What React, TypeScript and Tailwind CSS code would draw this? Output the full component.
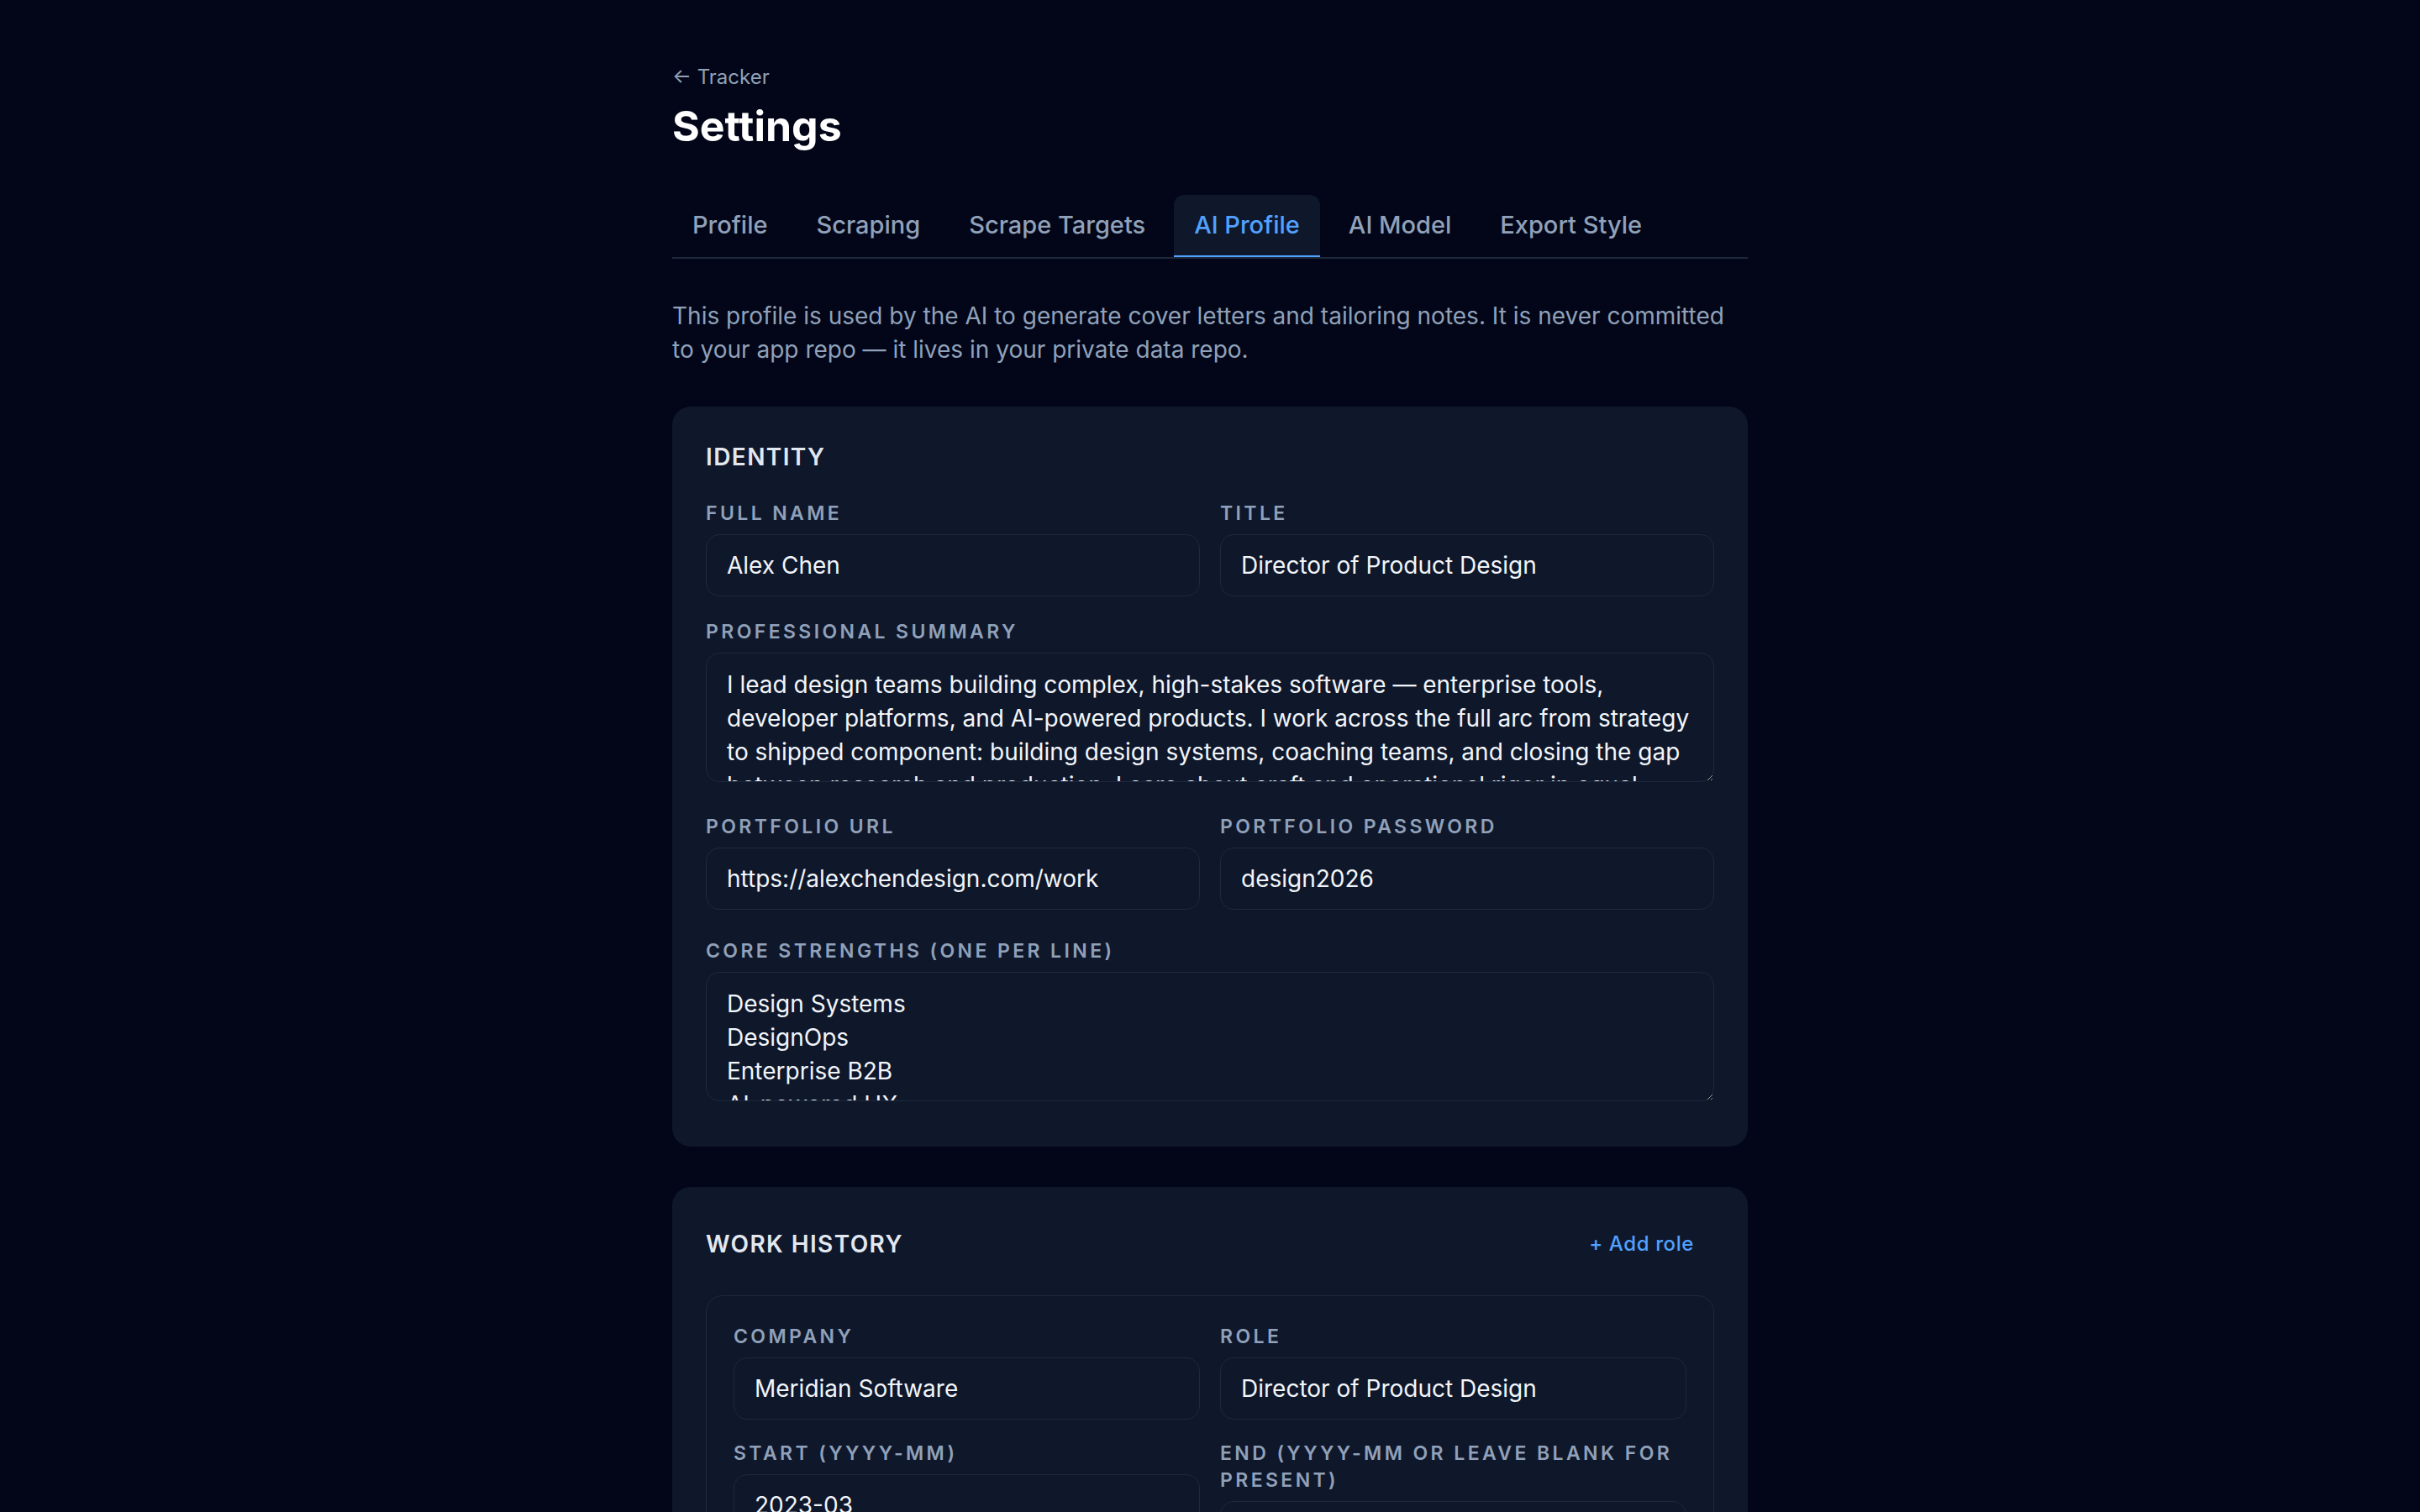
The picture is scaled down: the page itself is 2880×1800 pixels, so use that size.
import { useState } from "react";

const labelCls =
  "block text-[23px] leading-[32px] font-semibold uppercase tracking-[3.4px] text-slate-400 mb-[9px]";
const inputCls =
  "block w-full h-[74px] rounded-[16px] border border-slate-800 bg-slate-900 px-[24px] py-[16px] text-[28px] leading-[40px] text-slate-100 outline-none";
const areaCls =
  "block w-full h-[154px] rounded-[16px] border border-slate-800 bg-slate-900 px-[24px] pt-[17px] pb-[15px] text-[28px] leading-[40px] text-slate-100 outline-none overflow-hidden";

const tabs = ["Profile", "Scraping", "Scrape Targets", "AI Profile", "AI Model", "Export Style"];

const summary =
  "I lead design teams building complex, high-stakes software — enterprise tools, developer platforms, and AI-powered products. I work across the full arc from strategy to shipped component: building design systems, coaching teams, and closing the gap between research and production. I care about craft and operational rigor in equal measure.";

const strengths = "Design Systems\nDesignOps\nEnterprise B2B\nAI-powered UX\nDeveloper Tools\nTeam Leadership";

const Field = ({ label, value }: { label: string; value: string }) => (
  <div>
    <label className={labelCls}>{label}</label>
    <input className={inputCls} defaultValue={value} />
  </div>
);

const App = () => {
  const [active, setActive] = useState("AI Profile");

  return (
    <div className="min-h-screen bg-slate-950 font-['Inter',sans-serif] pb-[120px]">
      <div className="max-w-[1280px] mx-auto pt-[76px]">
        <a className="block text-[24px] leading-[32px] text-slate-400 hover:text-slate-200 cursor-pointer">
          ← Tracker
        </a>
        <h1 className="mt-[10px] text-[50px] leading-[64px] font-bold text-white">Settings</h1>

        <div className="mt-[50px] flex gap-[10px] border-b-2 border-slate-800">
          {tabs.map((t) => (
            <button
              key={t}
              onClick={() => setActive(t)}
              className={
                t === active
                  ? "px-[24px] pt-[14px] pb-[14px] text-[29px] leading-[44px] font-medium rounded-t-[12px] border-b-2 border-blue-400 bg-slate-900 text-blue-400"
                  : "px-[24px] pt-[14px] pb-[14px] text-[29px] leading-[44px] font-medium rounded-t-[12px] border-b-2 border-transparent text-slate-400 hover:text-slate-200"
              }
            >
              {t}
            </button>
          ))}
        </div>

        <p className="mt-[48px] text-[28px] leading-[40px] text-slate-400">
          This profile is used by the AI to generate cover letters and tailoring notes. It is never committed to your
          app repo — it lives in your private data repo.
        </p>

        <section className="mt-[48px] rounded-[22px] bg-slate-900 px-[40px] pt-[40px] pb-[54px]">
          <h2 className="mb-[31px] text-[28px] leading-[40px] font-semibold uppercase tracking-[1.4px] text-slate-200">
            Identity
          </h2>
          <div className="grid grid-cols-2 gap-x-[24px]">
            <Field label="Full name" value="Alex Chen" />
            <Field label="Title" value="Director of Product Design" />
          </div>
          <div className="mt-[26px]">
            <label className={labelCls}>Professional summary</label>
            <textarea className={areaCls} rows={3} defaultValue={summary} />
          </div>
          <div className="mt-[37px] grid grid-cols-2 gap-x-[24px]">
            <Field label="Portfolio URL" value="https://alexchendesign.com/work" />
            <Field label="Portfolio password" value="design2026" />
          </div>
          <div className="mt-[33px]">
            <label className={labelCls}>Core strengths (one per line)</label>
            <textarea className={areaCls} rows={3} defaultValue={strengths} />
          </div>
        </section>

        <section className="mt-[48px] rounded-[22px] bg-slate-900 px-[40px] pt-[40px] pb-[52px]">
          <div className="mb-[33px] flex h-[56px] items-center justify-between">
            <h2 className="text-[28px] leading-[40px] font-semibold uppercase tracking-[1.4px] text-slate-200">
              Work history
            </h2>
            <button className="px-[24px] py-[12px] text-[24px] leading-[32px] font-medium tracking-[0.6px] text-blue-400 hover:text-blue-300">
              + Add role
            </button>
          </div>

          <div className="rounded-[20px] border border-slate-800 p-[32px]">
            <div className="grid grid-cols-2 gap-x-[24px] gap-y-[24px]">
              <Field label="Company" value="Meridian Software" />
              <Field label="Role" value="Director of Product Design" />
              <Field label="Start (YYYY-MM)" value="2023-03" />
              <Field label="End (YYYY-MM or leave blank for present)" value="" />
            </div>
            <div className="mt-[24px]">
              <label className={labelCls}>Highlights (one per line)</label>
              <textarea
                className={areaCls}
                rows={3}
                defaultValue={"Built and scaled the design org from 4 to 18\nLaunched the Meridian design system\nLed AI assistant product from 0 to 1"}
              />
            </div>
          </div>
        </section>
      </div>
    </div>
  );
};

export default App;
